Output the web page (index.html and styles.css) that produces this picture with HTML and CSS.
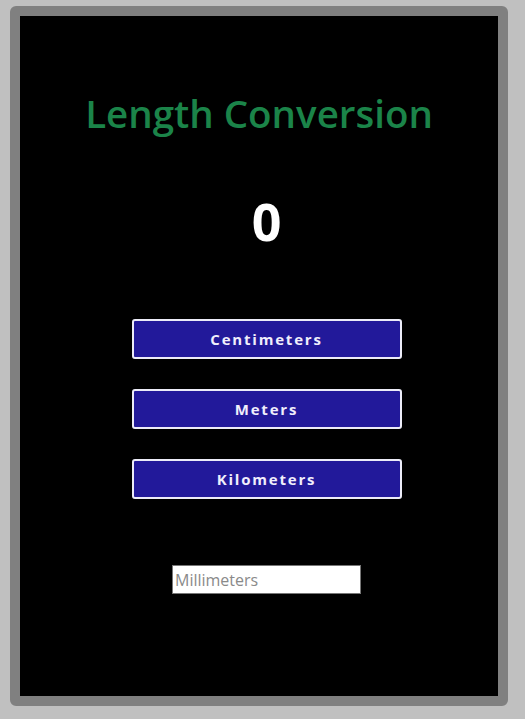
FILE: index.html
```html
<!DOCTYPE html>
<html>
<head>
<meta charset="utf-8">
<link rel="stylesheet" href="styles.css">
</head>
<body>
<div class="frame">
  <h1 class="title">Length Conversion</h1>
  <div class="body">
    <div class="value">0</div>
    <div class="buttons">
      <button class="btn">Centimeters</button>
      <button class="btn">Meters</button>
      <button class="btn">Kilometers</button>
    </div>
    <input class="field" type="text" placeholder="Millimeters">
  </div>
</div>
</body>
</html>
```

FILE: styles.css
```css
html, body {
  margin: 0;
  padding: 0;
}
body {
  background: #c0c0c0;
  padding: 6px 0 0 10px;
  font-family: "Open Sans", "Noto Sans", sans-serif;
}
.frame {
  width: 478px;
  height: 680px;
  border: 10px solid #808080;
  border-radius: 6px;
  background: #000;
  display: flex;
  flex-direction: column;
  align-items: center;
}
.title {
  margin: 70px 0 0;
  font-size: 38.5px;
  font-weight: 600;
  line-height: 54px;
  color: #1b8449;
}
.body {
  align-self: stretch;
  padding-left: 15px;
  display: flex;
  flex-direction: column;
  align-items: center;
}
.value {
  margin-top: 46px;
  font-size: 52px;
  font-weight: 700;
  line-height: 70px;
  color: #fff;
}
.buttons {
  margin-top: 63px;
  display: flex;
  flex-direction: column;
  gap: 30px;
}
.btn {
  width: 270px;
  height: 40px;
  border: 2px solid #ececf8;
  border-radius: 3px;
  background: #22199a;
  color: #f0eefc;
  font-family: "Open Sans", "Noto Sans", sans-serif;
  font-size: 15px;
  font-weight: 700;
  letter-spacing: 1.8px;
  cursor: pointer;
}
.field {
  margin-top: 66px;
  width: 189px;
  height: 29px;
  box-sizing: border-box;
  border: 1px solid #767676;
  padding: 0 2px;
  font-family: "Open Sans", "Noto Sans", sans-serif;
  font-size: 16px;
  background: #fff;
}
.field::placeholder {
  color: #8a8a8a;
}
```
